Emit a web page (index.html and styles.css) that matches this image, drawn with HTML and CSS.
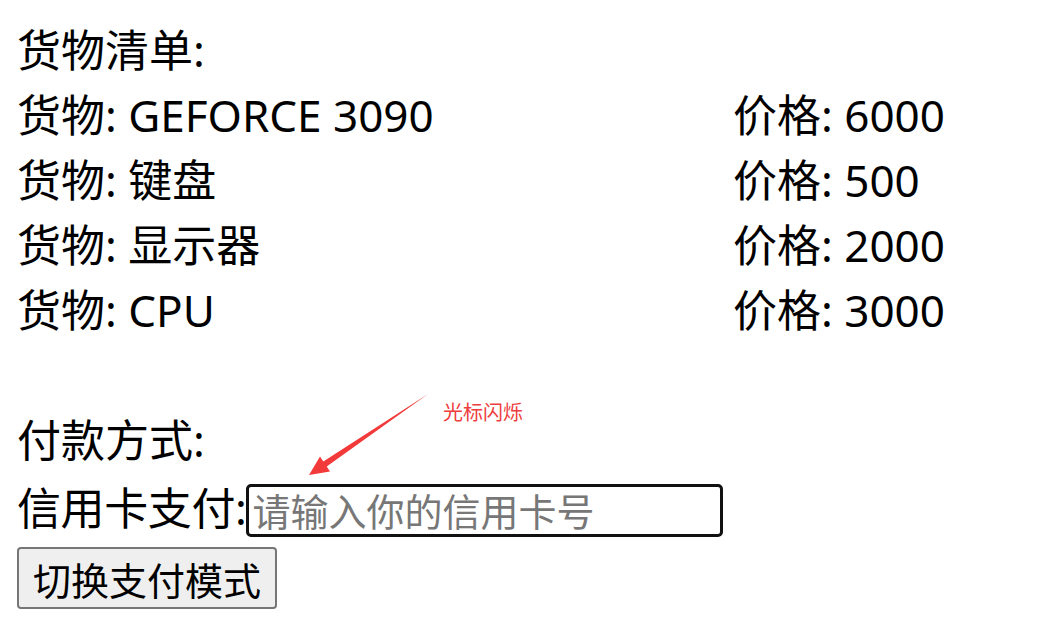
FILE: index.html
```html
<!DOCTYPE html>
<html lang="zh-CN">
<head>
<meta charset="utf-8">
<title>货物清单</title>
<link rel="stylesheet" href="styles.css">
</head>
<body>
<div class="page">
  <div class="line">货物清单:</div>
  <div class="goods">
    <div class="line">货物: GEFORCE 3090</div><div class="line">价格: 6000</div>
    <div class="line">货物: 键盘</div><div class="line">价格: 500</div>
    <div class="line">货物: 显示器</div><div class="line">价格: 2000</div>
    <div class="line">货物: CPU</div><div class="line">价格: 3000</div>
  </div>
  <div class="line blank"></div>
  <div class="line">付款方式:</div>
  <div class="pay-row">
    <span class="pay-label">信用卡支付:</span>
    <input class="card-input" type="text" placeholder="请输入你的信用卡号">
  </div>
  <button class="switch-btn" type="button">切换支付模式</button>

  <div class="annotation">
    <svg class="arrow" width="140" height="100" viewBox="300 385 140 100" xmlns="http://www.w3.org/2000/svg">
      <polygon points="428,394 326.7,466.5 330,471.4 309,475 320,456.6 323.3,461.5" fill="#f23a3a"/>
    </svg>
    <span class="note">光标闪烁</span>
  </div>
</div>
</body>
</html>
```
FILE: styles.css
```css
html, body {
  margin: 0;
  padding: 0;
  background: #ffffff;
}

.page {
  position: relative;
  padding: 18px 17px 0 17px;
  font-family: "Noto Sans", "Noto Sans CJK SC", sans-serif;
  font-size: 44px;
  color: #000000;
}

.line {
  line-height: 65px;
  height: 65px;
  white-space: nowrap;
}

.goods {
  display: grid;
  grid-template-columns: 716px auto;
}

.pay-row {
  display: flex;
  align-items: flex-start;
  height: 70px;
}

.pay-label {
  line-height: 70px;
  white-space: nowrap;
  letter-spacing: -0.4px;
}

.card-input {
  box-sizing: border-box;
  width: 477px;
  height: 53px;
  margin: 11px 0 0 0;
  padding: 0 3px 2px 3px;
  border: 3px solid #111111;
  border-radius: 5px;
  font-family: "Noto Sans CJK SC", sans-serif;
  font-size: 38px;
  color: #000;
  outline: none;
  background: #fff;
}

.card-input::placeholder {
  color: #777777;
}

.switch-btn {
  box-sizing: border-box;
  display: block;
  margin-top: 4px;
  width: 260px;
  height: 62px;
  padding: 0 14px;
  border: 2px solid #767676;
  border-radius: 4px;
  background: #efefef;
  font-family: "Noto Sans CJK SC", sans-serif;
  font-size: 38px;
  color: #000;
}

.annotation {
  position: absolute;
  left: 300px;
  top: 385px;
  width: 240px;
  height: 100px;
}

.arrow {
  position: absolute;
  left: 0;
  top: 0;
}

.note {
  position: absolute;
  left: 143px;
  top: 15px;
  font-family: "Noto Sans CJK SC", sans-serif;
  font-size: 20px;
  line-height: 24px;
  color: #ee3d3d;
  white-space: nowrap;
}
```
